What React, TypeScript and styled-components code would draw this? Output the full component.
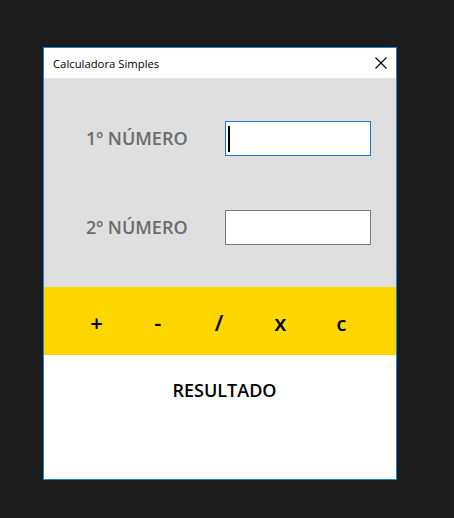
import React from "react";
import styled, { createGlobalStyle } from "styled-components";

const Global = createGlobalStyle`
  html, body { margin: 0; padding: 0; background: #1c1c1c; }
  body { font-family: "Open Sans", "Noto Sans", sans-serif; }
  #root { padding: 47px 0 0 43px; }
  * { box-sizing: border-box; }
`;

const Window = styled.div`
  width: 354px;
  height: 433px;
  border: 1px solid #1883d7;
  background: #ffffff;
  display: flex;
  flex-direction: column;
`;

const TitleBar = styled.div`
  height: 30px;
  display: flex;
  align-items: center;
  justify-content: space-between;
  padding: 0 9px 0 9px;
  background: #ffffff;
`;

const Title = styled.span`
  font-size: 11.3px;
  color: #000;
`;

const CloseBtn = styled.div`
  width: 12px;
  height: 12px;
  display: flex;
  align-items: center;
  justify-content: center;
`;

const InputPanel = styled.div`
  background: #dfdfdf;
  padding: 43px 24px 42px 42px;
  display: flex;
  flex-direction: column;
  gap: 54px;
`;

const Row = styled.div`
  display: flex;
  align-items: center;
  height: 35px;
`;

const Label = styled.span`
  width: 139px;
  font-size: 18px;
  font-weight: 600;
  color: #6c6c6c;
  padding-bottom: 2px;
`;

const Field = styled.div<{ $focused?: boolean }>`
  width: 146px;
  height: 35px;
  background: #fff;
  border: 1px solid ${(p) => (p.$focused ? "#1874d0" : "#7a7a7a")};
  display: flex;
  align-items: center;
  padding-left: 2px;
`;

const Caret = styled.div`
  width: 2px;
  height: 26px;
  background: #000;
`;

const OpBar = styled.div`
  height: 68px;
  background: #ffd700;
  display: flex;
  justify-content: center;
  align-items: baseline;
  padding: 20px 2px 0 0;
`;

const Op = styled.span<{ $size?: number }>`
  width: 61.25px;
  text-align: center;
  font-size: ${(p) => p.$size ?? 22}px;
  font-weight: 600;
  color: #000;
`;

const ResultArea = styled.div`
  flex: 1;
  display: flex;
  justify-content: center;
  padding: 23px 0 0 9px;
`;

const Result = styled.span`
  font-size: 18px;
  font-weight: 600;
  color: #000;
  height: 24px;
`;

export default function App() {
  return (
    <>
      <Global />
      <Window>
        <TitleBar>
          <Title>Calculadora Simples</Title>
          <CloseBtn>
            <svg width="12" height="12" viewBox="0 0 12 12">
              <path d="M0.5 0.5 L11.5 11.5 M11.5 0.5 L0.5 11.5" stroke="#000" strokeWidth="1.1" />
            </svg>
          </CloseBtn>
        </TitleBar>
        <InputPanel>
          <Row>
            <Label>1º NÚMERO</Label>
            <Field $focused>
              <Caret />
            </Field>
          </Row>
          <Row>
            <Label>2º NÚMERO</Label>
            <Field />
          </Row>
        </InputPanel>
        <OpBar>
          <Op>+</Op>
          <Op>-</Op>
          <Op>/</Op>
          <Op>x</Op>
          <Op $size={20}>c</Op>
        </OpBar>
        <ResultArea>
          <Result>RESULTADO</Result>
        </ResultArea>
      </Window>
    </>
  );
}
